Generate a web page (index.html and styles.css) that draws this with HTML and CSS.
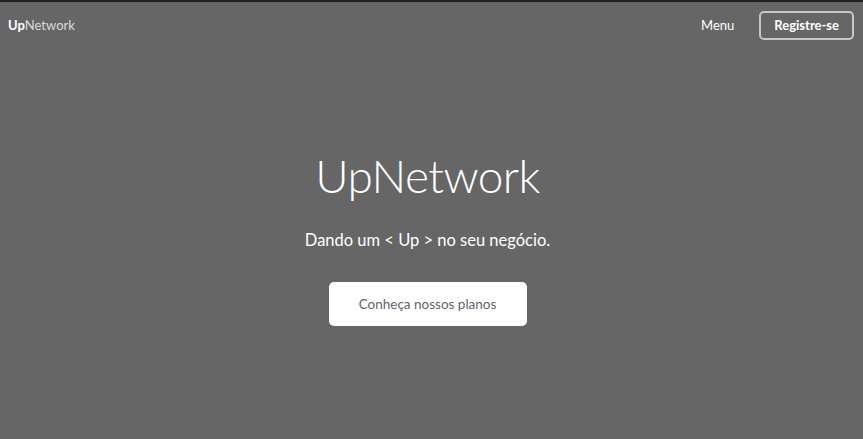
FILE: index.html
```html
<!DOCTYPE html>
<html lang="pt-BR">
<head>
<meta charset="utf-8">
<title>UpNetwork</title>
<link rel="stylesheet" href="styles.css">
</head>
<body>
<div class="page">
  <header class="topbar">
    <a class="logo" href="#"><b>Up</b>Network</a>
    <nav class="nav">
      <a class="nav-link" href="#">Menu</a>
      <a class="btn-outline" href="#">Registre-se</a>
    </nav>
  </header>
  <main class="hero">
    <h1 class="hero-title">UpNetwork</h1>
    <p class="hero-sub">Dando um &lt; Up &gt; no seu negócio.</p>
    <a class="btn-white" href="#">Conheça nossos planos</a>
  </main>
</div>
</body>
</html>
```
FILE: styles.css
```css
* { box-sizing: border-box; }
html, body { margin: 0; height: 100%; }
body {
  background: #666666;
  font-family: "Lato", "Open Sans", sans-serif;
  color: #fff;
}
a { text-decoration: none; color: inherit; }
.page {
  min-height: 100%;
  border-top: 2px solid #1e1e1e;
  display: flex;
  flex-direction: column;
}
.topbar {
  display: flex;
  align-items: center;
  justify-content: space-between;
  height: 46px;
  padding: 0 9px 0 8px;
}
.logo {
  font-size: 13px;
  color: #dcdcdc;
}
.logo b { color: #fff; font-weight: 700; }
.nav { display: flex; align-items: center; gap: 25px; }
.nav-link { font-size: 13px; color: #fff; }
.btn-outline {
  font-size: 13px;
  font-weight: 700;
  color: #fff;
  border: 2px solid #c8c8c8;
  border-radius: 5px;
  height: 29px;
  padding: 0 13px;
  display: flex;
  align-items: center;
}
.hero {
  display: flex;
  flex-direction: column;
  align-items: center;
  padding: 96px 8px 0 0;
}
.hero-title {
  margin: 0;
  font-size: 46px;
  font-weight: 300;
  line-height: 64px;
  letter-spacing: -0.6px;
}
.hero-sub {
  margin: 20px 0 0;
  font-size: 16.5px;
  font-weight: 400;
  line-height: 24px;
}
.btn-white {
  margin-top: 30px;
  width: 198px;
  height: 44px;
  background: #fff;
  color: #5f6368;
  border-radius: 5px;
  font-size: 13.5px;
  display: flex;
  align-items: center;
  justify-content: center;
}
```
